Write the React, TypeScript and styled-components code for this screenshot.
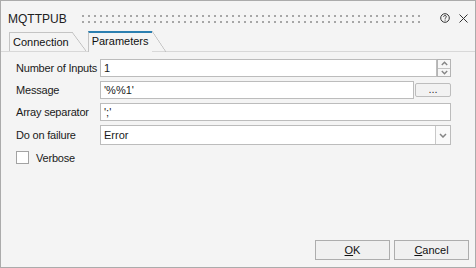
import React from 'react';
import styled, { createGlobalStyle } from 'styled-components';

const GlobalStyle = createGlobalStyle`
  html, body {
    margin: 0;
    padding: 0;
    background: #f4f4f4;
  }
  * {
    box-sizing: border-box;
  }
`;

const PAGE_BG = '#f4f4f4';

export default function App() {
  return (
    <>
      <GlobalStyle />
      <Window>
        <TitleBar>
          <Title>MQTTPUB</Title>
          <Gripper />
          <TitleIcon aria-label="help">
            <svg width="10" height="10" viewBox="0 0 10 10">
              <circle cx="5" cy="5" r="4.3" fill="none" stroke="#333" strokeWidth="1" />
              <path d="M3.6 3.9 C3.6 2.9 4.3 2.5 5 2.5 C5.8 2.5 6.4 3 6.4 3.7 C6.4 4.5 5.1 4.8 5.1 5.8" fill="none" stroke="#333" strokeWidth="0.9" />
              <rect x="4.6" y="6.6" width="1" height="1" fill="#333" />
            </svg>
          </TitleIcon>
          <TitleIcon aria-label="close">
            <svg width="9" height="9" viewBox="0 0 9 9">
              <path d="M0.5 0.5 L8.5 8.5 M8.5 0.5 L0.5 8.5" stroke="#333" strokeWidth="1" />
            </svg>
          </TitleIcon>
        </TitleBar>

        <TabStrip>
          <Tab>Connection</Tab>
          <Tab $active>Parameters</Tab>
        </TabStrip>

        <Panel>
          <Form>
            <Label>Number of Inputs</Label>
            <FieldRow>
              <TextBox>1</TextBox>
              <Spinner>
                <SpinHalf>
                  <svg width="7" height="5" viewBox="0 0 7 5">
                    <path d="M0.8 4 L3.5 1.3 L6.2 4" fill="none" stroke="#858585" strokeWidth="1.4" />
                  </svg>
                </SpinHalf>
                <SpinHalf $bottom>
                  <svg width="7" height="5" viewBox="0 0 7 5">
                    <path d="M0.8 1 L3.5 3.7 L6.2 1" fill="none" stroke="#858585" strokeWidth="1.4" />
                  </svg>
                </SpinHalf>
              </Spinner>
            </FieldRow>

            <Label>Message</Label>
            <FieldRow>
              <TextBox>'%%1'</TextBox>
              <EllipsisButton>...</EllipsisButton>
            </FieldRow>

            <Label>Array separator</Label>
            <FieldRow>
              <TextBox>';'</TextBox>
            </FieldRow>

            <Label>Do on failure</Label>
            <FieldRow>
              <ComboBox>
                <ComboText>Error</ComboText>
                <DropButton>
                  <svg width="8" height="5" viewBox="0 0 8 5">
                    <path d="M1 1 L4 4 L7 1" fill="none" stroke="#858585" strokeWidth="1.5" />
                  </svg>
                </DropButton>
              </ComboBox>
            </FieldRow>

            <CheckRow>
              <CheckBox />
              <span>Verbose</span>
            </CheckRow>
          </Form>

          <Footer>
            <DialogButton>
              <u>O</u>K
            </DialogButton>
            <DialogButton>
              <u>C</u>ancel
            </DialogButton>
          </Footer>
        </Panel>
      </Window>
    </>
  );
}

// Styled Components
const Window = styled.div`
  width: 476px;
  height: 268px;
  border: 1px solid #ababab;
  background: ${PAGE_BG};
  display: flex;
  flex-direction: column;
  font-family: "Liberation Sans", Arial, sans-serif;
  font-size: 11px;
  color: #1a1a1a;
`;

const TitleBar = styled.div`
  height: 30px;
  padding: 4px 6px 0 7px;
  display: flex;
  align-items: center;
`;

const Title = styled.div`
  font-size: 12px;
  color: #202020;
  padding-top: 2px;
`;

const Gripper = styled.div`
  flex: 1;
  height: 8px;
  margin: 2px 11px 0 15px;
  background-color: #a6a6a6;
  background-image:
    linear-gradient(to bottom, transparent 2px, ${PAGE_BG} 2px),
    linear-gradient(to right, transparent 2px, ${PAGE_BG} 2px);
  background-size: 6px 6px, 6px 6px;
`;

const TitleIcon = styled.div`
  width: 12px;
  height: 12px;
  margin-left: 6px;
  display: flex;
  align-items: center;
  justify-content: center;
`;

const TabStrip = styled.div`
  height: 21px;
  padding-left: 8px;
  display: flex;
  align-items: flex-end;
  border-bottom: 1px solid #d8d8d8;
`;

const Tab = styled.div<{ $active?: boolean }>`
  position: relative;
  height: ${p => (p.$active ? '21px' : '19px')};
  margin-right: 16px;
  margin-bottom: ${p => (p.$active ? '-1px' : '0')};
  padding: ${p => (p.$active ? '2px 3px 0 3px' : '3px 3px 0 3px')};
  border-left: 1px solid #c4c4c4;
  border-top: ${p => (p.$active ? '2px solid #2b7fb0' : '1px solid #c4c4c4')};
  background: ${PAGE_BG};
  color: #111;
  z-index: ${p => (p.$active ? 2 : 1)};

  &::after {
    content: '';
    position: absolute;
    top: ${p => (p.$active ? '-2px' : '-1px')};
    right: -14px;
    width: 14px;
    bottom: ${p => (p.$active ? '0' : '0')};
    background: linear-gradient(
      to top right,
      transparent calc(50% - 0.7px),
      #bdbdbd 50%,
      transparent calc(50% + 0.7px)
    );
  }
`;

const Panel = styled.div`
  flex: 1;
  display: flex;
  flex-direction: column;
`;

const Form = styled.div`
  display: grid;
  grid-template-columns: 84px 1fr;
  row-gap: 4px;
  align-items: center;
  padding: 7px 24px 0 15px;
`;

const Label = styled.div`
  letter-spacing: -0.2px;
  white-space: nowrap;
`;

const FieldRow = styled.div`
  display: flex;
  align-items: center;
  gap: 1px;
`;

const TextBox = styled.div`
  flex: 1;
  height: 18px;
  padding: 0 3px;
  display: flex;
  align-items: center;
  background: #fff;
  border: 1px solid #bcbcbc;
`;

const Spinner = styled.div`
  width: 14px;
  height: 18px;
  margin-left: -1px;
  display: flex;
  flex-direction: column;
  border: 1px solid #b4b4b4;
  background: #f7f7f7;
`;

const SpinHalf = styled.div<{ $bottom?: boolean }>`
  flex: 1;
  display: flex;
  align-items: center;
  justify-content: center;
  border-top: ${p => (p.$bottom ? '1px solid #c4c4c4' : 'none')};
`;

const EllipsisButton = styled.div`
  width: 36px;
  height: 14px;
  display: flex;
  align-items: center;
  justify-content: center;
  padding-bottom: 3px;
  border: 1px solid #bdbdbd;
  border-radius: 2px;
  background: #f2f2f2;
  font-size: 11px;
  color: #333;
`;

const ComboBox = styled.div`
  flex: 1;
  height: 20px;
  display: flex;
  background: #fff;
  border: 1px solid #bcbcbc;
`;

const ComboText = styled.div`
  flex: 1;
  padding: 0 3px;
  display: flex;
  align-items: center;
`;

const DropButton = styled.div`
  width: 15px;
  display: flex;
  align-items: center;
  justify-content: center;
  border-left: 1px solid #c8c8c8;
  background: #fafafa;
`;

const CheckRow = styled.div`
  grid-column: 1 / -1;
  margin-top: 2px;
  display: flex;
  align-items: center;
  gap: 7px;
  letter-spacing: -0.2px;
`;

const CheckBox = styled.div`
  width: 13px;
  height: 13px;
  background: #fff;
  border: 1px solid #a3a3a3;
`;

const Footer = styled.div`
  margin-top: auto;
  display: flex;
  justify-content: flex-end;
  gap: 4px;
  padding: 0 6px 7px 0;
`;

const DialogButton = styled.div`
  width: 75px;
  height: 20px;
  display: flex;
  align-items: center;
  justify-content: center;
  border: 1px solid #adadad;
  background: #f0f0f0;
  color: #111;
`;
